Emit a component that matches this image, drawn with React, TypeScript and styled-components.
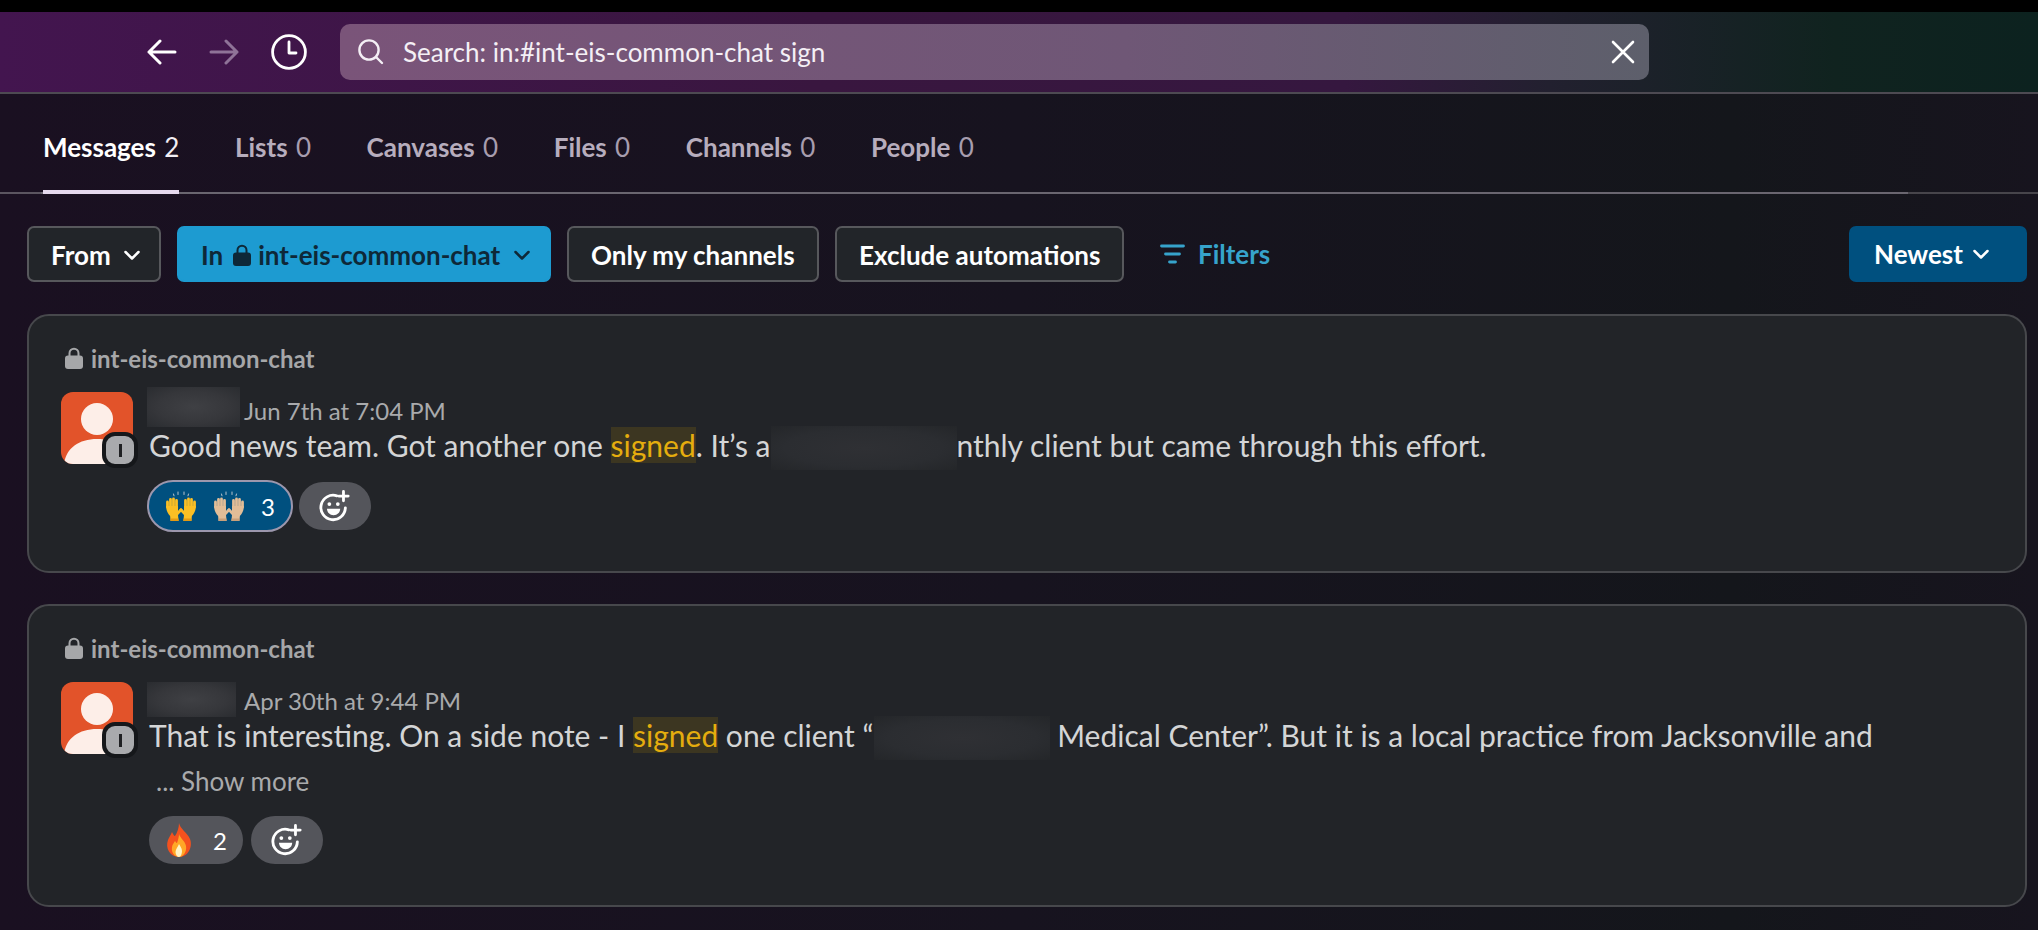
import React from "react";
import styled, { createGlobalStyle } from "styled-components";

const Global = createGlobalStyle`
  html, body { margin: 0; padding: 0; background: #000; }
  body { font-family: Lato, "Noto Sans", sans-serif; width: 2038px; height: 930px; overflow: hidden; }
  * { box-sizing: border-box; }
`;

const Page = styled.div`
  width: 2038px;
  height: 930px;
  padding-top: 12px;
  background: #000;
  display: flex;
  flex-direction: column;
`;
const TopBar = styled.header`
  height: 82px;
  flex: none;
  padding: 12px 0 0 147px;
  display: flex;
  align-items: flex-start;
  background: linear-gradient(90deg, #43154f 0%, #39163f 40%, #35173f 66%, #22202f 76%, #10231f 90%, #0c221f 100%);
  border-bottom: 2px solid #4d4a52;
`;
const NavButton = styled.button<{ $dim?: boolean; $w: number }>`
  width: ${(p) => p.$w}px;
  margin: 0;
  padding: 0;
  height: 56px;
  border: 0;
  background: none;
  color: ${(p) => (p.$dim ? "#8f7398" : "#fff")};
  display: flex;
  align-items: center;
  justify-content: center;
`;
const NavRow = styled.nav`
  display: flex;
  gap: 32px;
  width: 193px;
  flex: none;
  align-items: center;
`;
const SearchBox = styled.div`
  width: 1309px;
  height: 56px;
  border-radius: 10px;
  background: linear-gradient(90deg, #7a5479 0%, #6f5776 60%, #5d5f6b 100%);
  display: flex;
  align-items: center;
  padding: 0 14px 0 17px;
  color: #f4eff5;
  font-size: 26px;
`;
const SearchText = styled.span`
  flex: 1;
  margin-left: 19px;
`;
const Main = styled.main`
  flex: 1;
  background: linear-gradient(90deg, #1a1021 0%, #17131f 50%, #14161b 85%, #17141e 100%);
  padding: 0 11px 0 27px;
  display: flex;
  flex-direction: column;
`;
const Tabs = styled.div`
  height: 100px;
  margin: 0 -11px 0 -27px;
  padding-left: 43px;
  display: flex;
  gap: 55.6px;
  background: linear-gradient(90deg, #5b5560 0, #5b5560 2%, #6a6670 2%, #6a6670 93.6%, #47454b 93.6%) bottom / 100% 2px no-repeat;
`;
const Tab = styled.div<{ $active?: boolean }>`
  height: 100px;
  padding-top: 38px;
  line-height: 30px;
  font-size: 26px;
  font-weight: 700;
  color: ${(p) => (p.$active ? "#fff" : "#b7adbd")};
  border-bottom: ${(p) => (p.$active ? "4px solid #e6d9ee" : "none")};
  white-space: pre;
`;
const Count = styled.span<{ $active?: boolean }>`
  font-weight: 400;
  margin-left: 2px;
  color: ${(p) => (p.$active ? "#f2eef4" : "#a79dae")};
`;
const Toolbar = styled.div`
  margin-top: 32px;
  height: 56px;
  display: flex;
  align-items: center;
  gap: 16px;
`;
const Chip = styled.button<{ $w: number; $on?: boolean }>`
  width: ${(p) => p.$w}px;
  height: 56px;
  padding: 2px 18px 0 22px;
  border-radius: 7px;
  border: 2px solid ${(p) => (p.$on ? "#1d9bd1" : "#57585c")};
  background: ${(p) => (p.$on ? "#1d9bd1" : "#222529")};
  color: ${(p) => (p.$on ? "#0e2838" : "#fff")};
  font: 700 26px Lato, sans-serif;
  display: flex;
  align-items: center;
  justify-content: space-between;
  white-space: pre;
`;
const ChipLabel = styled.span`
  display: flex;
  align-items: center;
  gap: 7px;
`;
const ChipLock = styled.span`
  display: flex;
  margin-left: 3px;
`;
const Filters = styled.div`
  margin-left: 20px;
  display: flex;
  align-items: center;
  gap: 13px;
  color: #36a3cb;
  font-size: 26px;
  font-weight: 700;
`;
const Sort = styled.button`
  margin-left: auto;
  width: 178px;
  height: 56px;
  padding: 0 24px 0 25px;
  border: 0;
  border-radius: 7px;
  background: #00507f;
  color: #fff;
  font: 700 26px Lato, sans-serif;
  display: flex;
  align-items: center;
  gap: 9px;
`;
const Cards = styled.div`
  margin-top: 32px;
  display: flex;
  flex-direction: column;
  gap: 31px;
`;
const Card = styled.article<{ $h: number }>`
  height: ${(p) => p.$h}px;
  border: 2px solid #47484c;
  border-radius: 22px;
  background: #222428;
  padding: 30px 0 0 32px;
`;
const ChannelLine = styled.div`
  height: 24px;
  margin-left: 4px;
  display: flex;
  align-items: center;
  gap: 8px;
  color: #a6a7a9;
  font-size: 24px;
  font-weight: 700;
`;
const Body = styled.div`
  margin-top: 22px;
  display: flex;
  gap: 14px;
`;
const AvatarWrap = styled.div`
  position: relative;
  width: 72px;
  height: 72px;
  flex: none;
`;
const AvatarBox = styled.div`
  width: 72px;
  height: 72px;
  border-radius: 12px;
  overflow: hidden;
  background: #e2532a;
`;
const Status = styled.div`
  position: absolute;
  right: -5px;
  bottom: -4px;
  width: 36px;
  height: 36px;
  border-radius: 13px;
  background: #a9aaad;
  border: 4px solid #15171a;
  display: flex;
  align-items: center;
  justify-content: center;
`;
const StatusBar = styled.div`
  width: 3px;
  height: 13px;
  background: #1f2023;
`;
const Content = styled.div`
  flex: 1;
`;
const NameRow = styled.div`
  height: 35px;
  display: flex;
  align-items: center;
`;
const NameBlur = styled.div<{ $w: number; $h: number; $t: number; $gap: number }>`
  width: ${(p) => p.$w}px;
  height: ${(p) => p.$h}px;
  margin: ${(p) => p.$t}px ${(p) => p.$gap}px 0 0;
  flex: none;
  background: radial-gradient(ellipse at center, #3f4044 0%, #36373b 55%, #2a2c30 100%);
`;
const DateText = styled.span`
  margin-top: 2px;
  color: #a9aaac;
  font-size: 24px;
`;
const MsgLine = styled.div<{ $x: number }>`
  height: 36px;
  margin-left: ${(p) => p.$x}px;
  display: flex;
  align-items: center;
  white-space: pre;
  color: #d4d5d6;
  font-size: 30px;
`;
const Hit = styled.span`
  color: #e5ad0e;
  background: #3c3621;
  line-height: 36px;
`;
const TextBlur = styled.span<{ $w: number }>`
  width: ${(p) => p.$w}px;
  height: 44px;
  margin-top: 6px;
  flex: none;
  background: radial-gradient(ellipse at center, #2f3034 0%, #2b2d31 60%, #242629 100%);
`;
const More = styled.div`
  height: 34px;
  margin: 11px 0 0 9px;
  display: flex;
  align-items: center;
  color: #a9aaac;
  font-size: 26px;
`;
const Reactions = styled.div<{ $t: number; $x: number; $gap: number }>`
  margin: ${(p) => p.$t}px 0 0 ${(p) => p.$x}px;
  display: flex;
  align-items: center;
  gap: ${(p) => p.$gap}px;
`;
const Pill = styled.div<{ $w: number; $on?: boolean; $g?: number }>`
  width: ${(p) => p.$w}px;
  height: ${(p) => (p.$on ? 52 : 48)}px;
  border-radius: 26px;
  background: ${(p) => (p.$on ? "#00507f" : "#54555b")};
  border: ${(p) => (p.$on ? "2px solid #9c97ad" : "none")};
  color: #fff;
  font-size: 24px;
  display: flex;
  align-items: center;
  justify-content: center;
  gap: ${(p) => p.$g ?? 0}px;
`;

const Back = () => (
  <svg width="30" height="26" viewBox="0 0 30 26" fill="none" stroke="currentColor" strokeWidth="3" strokeLinecap="round" strokeLinejoin="round">
    <path d="M28 13H2M13 2 2 13l11 11" />
  </svg>
);
const Forward = () => (
  <svg width="30" height="26" viewBox="0 0 30 26" fill="none" stroke="currentColor" strokeWidth="3" strokeLinecap="round" strokeLinejoin="round">
    <path d="M2 13h26M17 2l11 11-11 11" />
  </svg>
);
const Clock = () => (
  <svg width="36" height="36" viewBox="0 0 36 36" fill="none" stroke="currentColor" strokeWidth="2.8" strokeLinecap="round" strokeLinejoin="round">
    <circle cx="18" cy="18" r="16.4" />
    <path d="M18 8v11h7" />
  </svg>
);
const Search = () => (
  <svg width="27" height="26" viewBox="0 0 27 26" fill="none" stroke="#f4eff5" strokeWidth="2.4" strokeLinecap="round">
    <circle cx="12" cy="11" r="9.6" />
    <path d="m19 18 6 6" />
  </svg>
);
const Close = () => (
  <svg width="24" height="24" viewBox="0 0 24 24" fill="none" stroke="#fff" strokeWidth="2.6" strokeLinecap="round">
    <path d="M2 2l20 20M22 2 2 22" />
  </svg>
);
const Chevron = () => (
  <svg width="18" height="18" viewBox="0 0 18 18" fill="none" stroke="currentColor" strokeWidth="2.5" strokeLinecap="round" strokeLinejoin="round">
    <path d="M2.500 6 9 12.500 15.500 6" />
  </svg>
);
const Lock = ({ w, h, color }: { w: number; h: number; color: string }) => (
  <svg width={w} height={h} viewBox="0 0 18 22" fill={color}>
    <path d="M3.5 9V6.2a5.5 5.5 0 0 1 11 0V9h-2V6.2a3.5 3.5 0 0 0-7 0V9z" />
    <rect x="0" y="8.5" width="18" height="13.5" rx="3" />
  </svg>
);
const FilterIcon = () => (
  <svg width="25" height="20" viewBox="0 0 25 20" fill="none" stroke="#36a3cb" strokeWidth="2.8" strokeLinecap="round">
    <path d="M1.5 2h22M5.5 10h14M9.5 18h6" />
  </svg>
);
const Person = () => (
  <svg width="72" height="72" viewBox="0 0 72 72">
    <circle cx="36" cy="27" r="16" fill="#fdeee8" />
    <path d="M3 72C5 56 18 47 36 47s31 9 33 25z" fill="#fdeee8" />
  </svg>
);
const SmilePlus = () => (
  <svg width="32" height="32" viewBox="0 0 34 34" fill="none" stroke="#fff" strokeLinecap="round">
    <path d="M19 6.200A13 13 0 1 0 28 19" strokeWidth="3" />
    <path d="M26 1.500v10M21 6.500h10" strokeWidth="3" />
    <circle cx="11" cy="15" r="2" fill="#fff" stroke="none" />
    <circle cx="20" cy="15" r="2" fill="#fff" stroke="none" />
    <path d="M8.500 20h14c0 4-3 6.800-7 6.800s-7-2.800-7-6.800z" fill="#fff" stroke="none" />
  </svg>
);
const HandHalf = ({ skin, shade }: { skin: string; shade: string }) => (
  <>
    <g stroke={skin} strokeWidth="2.8" strokeLinecap="round" fill="none">
      <path d="M2.500 16V11M5.500 15V8.500M8.500 15V8M11.500 16V9.500" />
      <path d="M12.500 22.500 16 18.800" />
    </g>
    <path d="M1.100 15H13v9l.6 6H5.600l-.5-5C2.500 22 1.100 19 1.100 15z" fill={skin} />
    <path d="M5.400 27.500h8l.2 2.500H5.600z" fill={shade} />
  </>
);
const Hands = ({ skin, shade }: { skin: string; shade: string }) => (
  <svg width="32" height="30" viewBox="0 0 32 30">
    <g stroke="#b8c3cc" strokeWidth="1" strokeLinecap="round">
      <path d="M8.500 3l.5 1.800M13 1v2.500M19 1v2.500M23.500 3l-.5 1.800" />
    </g>
    <HandHalf skin={skin} shade={shade} />
    <g transform="translate(32 0) scale(-1 1)">
      <HandHalf skin={skin} shade={shade} />
    </g>
  </svg>
);
const Flame = () => (
  <svg width="28" height="34" viewBox="0 0 28 34">
    <path d="M14 0c1 6 8 9 11 16 3 8-2 18-11 18S0 25 3 17c1-3 3-5 4-8 1 2 2 4 3 4 2-3 4-8 4-13z" fill="#f4511e" />
    <path d="M14 11c1 4 6 7 7 12 1 6-3 11-7 11s-8-4-7-10c.5-3 2-4 3-6 1 1 1 2 2 2 1-3 2-6 2-9z" fill="#ffa726" />
    <path d="M14 21c1 2 3 4 3 7s-1.500 6-3 6-3.500-2-3.500-5 2.500-5 3.500-8z" fill="#fff3c4" />
  </svg>
);

const tabs: [string, number][] = [["Messages", 2], ["Lists", 0], ["Canvases", 0], ["Files", 0], ["Channels", 0], ["People", 0]];

const CardHead = () => (
  <ChannelLine>
    <Lock w={18} h={22} color="#a6a7a9" />
    int-eis-common-chat
  </ChannelLine>
);
const Avatar = () => (
  <AvatarWrap>
    <AvatarBox><Person /></AvatarBox>
    <Status><StatusBar /></Status>
  </AvatarWrap>
);

export default function App() {
  return (
    <Page>
      <Global />
      <TopBar>
        <NavRow>
          <NavButton $w={30}><Back /></NavButton>
          <NavButton $w={30} $dim><Forward /></NavButton>
          <NavButton $w={36}><Clock /></NavButton>
        </NavRow>
        <SearchBox>
          <Search />
          <SearchText>Search: in:#int-eis-common-chat sign</SearchText>
          <Close />
        </SearchBox>
      </TopBar>
      <Main>
        <Tabs>
          {tabs.map(([name, n], i) => (
            <Tab key={name} $active={i === 0}>
              {name} <Count $active={i === 0}>{n}</Count>
            </Tab>
          ))}
        </Tabs>
        <Toolbar>
          <Chip $w={134}>From<Chevron /></Chip>
          <Chip $w={374} $on>
            <ChipLabel>In<ChipLock><Lock w={18} h={22} color="#0e2838" /></ChipLock>int-eis-common-chat</ChipLabel>
            <Chevron />
          </Chip>
          <Chip $w={252}>Only my channels</Chip>
          <Chip $w={289}>Exclude automations</Chip>
          <Filters><FilterIcon />Filters</Filters>
          <Sort>Newest<Chevron /></Sort>
        </Toolbar>
        <Cards>
          <Card $h={259}>
            <CardHead />
            <Body>
              <Avatar />
              <Content>
                <NameRow>
                  <NameBlur $w={93} $h={40} $t={-6} $gap={4} />
                  <DateText>Jun 7th at 7:04 PM</DateText>
                </NameRow>
                <MsgLine $x={2}>
                  Good news team. Got another one <Hit>signed</Hit>. It’s a<TextBlur $w={186} />nthly client but came through this effort.
                </MsgLine>
                <Reactions $t={17} $x={0} $gap={6}>
                  <Pill $w={146} $on $g={16}>
                    <Hands skin="#fbbf24" shade="#e59a12" />
                    <Hands skin="#e2bd97" shade="#c9a07a" />
                    3
                  </Pill>
                  <Pill $w={72}><SmilePlus /></Pill>
                </Reactions>
              </Content>
            </Body>
          </Card>
          <Card $h={303}>
            <CardHead />
            <Body>
              <Avatar />
              <Content>
                <NameRow>
                  <NameBlur $w={89} $h={35} $t={-1} $gap={8} />
                  <DateText>Apr 30th at 9:44 PM</DateText>
                </NameRow>
                <MsgLine $x={2}>
                  That is interesting. On a side note - I <Hit>signed</Hit> one client “<TextBlur $w={176} /> Medical Center”. But it is a local practice from Jacksonville and
                </MsgLine>
                <More>... Show more</More>
                <Reactions $t={18} $x={2} $gap={8}>
                  <Pill $w={94} $g={20}><Flame />2</Pill>
                  <Pill $w={72}><SmilePlus /></Pill>
                </Reactions>
              </Content>
            </Body>
          </Card>
        </Cards>
      </Main>
    </Page>
  );
}
